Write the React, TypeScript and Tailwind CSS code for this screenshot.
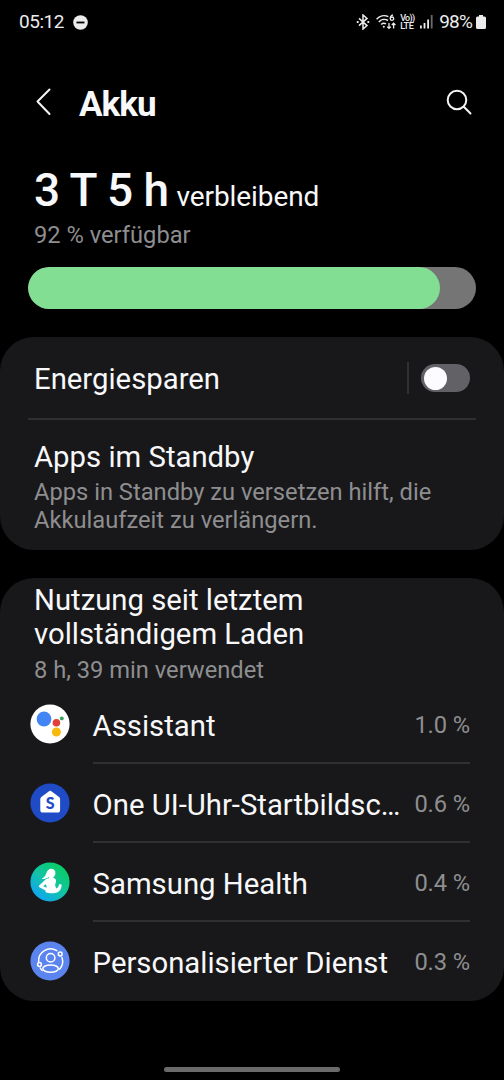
import type { ReactNode } from "react";

type AppUsage = {
  name: string;
  percent: string;
  icon: ReactNode;
};

function AssistantIcon() {
  return (
    <svg viewBox="0 0 40 40" className="h-10 w-10 shrink-0">
      <circle cx="20" cy="20" r="19.6" fill="#fff" />
      <circle cx="14" cy="15" r="7.4" fill="#4285f4" />
      <circle cx="26.4" cy="18.8" r="3.8" fill="#e0403a" />
      <circle cx="31.8" cy="14.4" r="1.9" fill="#34a060" />
      <circle cx="26.4" cy="28" r="4.5" fill="#f8b90c" />
    </svg>
  );
}

function ClockHomeIcon() {
  return (
    <svg viewBox="0 0 40 40" className="h-10 w-10 shrink-0">
      <circle cx="20" cy="20" r="19.6" fill="#1f4bc6" />
      <path
        d="M18.7 8.4a2.4 2.4 0 0 1 3 0l7.4 5.7a2.6 2.6 0 0 1 1 2V27a2.6 2.6 0 0 1-2.6 2.6H12.9A2.6 2.6 0 0 1 10.3 27V16.1a2.6 2.6 0 0 1 1-2z"
        fill="#fff"
      />
      <text
        x="20.2"
        y="26.3"
        textAnchor="middle"
        fontFamily="Lato, sans-serif"
        fontWeight="900"
        fontSize="16"
        fill="#1f4bc6"
      >
        S
      </text>
    </svg>
  );
}

function HealthIcon() {
  return (
    <svg viewBox="0 0 40 40" className="h-10 w-10 shrink-0">
      <defs>
        <linearGradient id="health" x1="0.15" y1="0.9" x2="0.75" y2="0.15">
          <stop offset="0" stopColor="#10a5f5" />
          <stop offset="0.55" stopColor="#12c4a4" />
          <stop offset="1" stopColor="#0acb6c" />
        </linearGradient>
      </defs>
      <circle cx="20" cy="20" r="19.6" fill="url(#health)" />
      <path
        d="M21.400 6.800a4 4 0 0 1 4 4.200c0 1.700-.6 3.200-1.900 4v1c1.300.3 2.300 1 2.500 2.200.3 1.800-.8 3.400-.8 5 0 1.200.7 2.200 1.400 3.200 1.300-.7 2.200-2.200 2.500-4.100l2.500.3c.1 3.300-1.200 6.600-4.300 8-3 .9-8 .9-11 0-.8-.5-1-1.300-.8-2.100L9.400 25.200c-.7-.6-.7-1.400 0-2l5.400-5c1-.9 2-1.500 4.100-1.900v-1.500c-1.800 1.700-4.200 2.500-7.100 1.900 2.200-1.300 3.200-2.200 4-4.200l.6-1.600c.8-2.300 2.600-4.100 5-4.100zM15.600 22.200l-2.500 2.100 3.500 1.500c.2-1.300-.2-2.600-1-3.600z"
        fill="#fff"
        fillRule="evenodd"
      />
    </svg>
  );
}

function CustomizationIcon() {
  return (
    <svg viewBox="0 0 40 40" className="h-10 w-10 shrink-0">
      <circle cx="20" cy="20" r="19.6" fill="#5c84ee" />
      <g fill="none" stroke="#fff" strokeWidth="1.5" strokeLinecap="round">
        <circle cx="20.6" cy="16.8" r="4.3" />
        <ellipse cx="20.6" cy="27.6" rx="7.8" ry="3.7" />
        <path d="M8.6 20.5A12 12 0 0 1 26.8 9.6" />
        <path d="M32 16.5A12 12 0 0 1 29.6 28.2M10.3 27Q11 28.5 12.2 29.5" />
        <circle cx="30.2" cy="13" r="1.9" />
        <circle cx="9.5" cy="23.5" r="1.9" />
      </g>
    </svg>
  );
}

const apps: AppUsage[] = [
  { name: "Assistant", percent: "1.0 %", icon: <AssistantIcon /> },
  {
    name: "One UI-Uhr-Startbildsc…",
    percent: "0.6 %",
    icon: <ClockHomeIcon />,
  },
  { name: "Samsung Health", percent: "0.4 %", icon: <HealthIcon /> },
  {
    name: "Personalisierter Dienst",
    percent: "0.3 %",
    icon: <CustomizationIcon />,
  },
];

function StatusBar() {
  return (
    <div className="flex h-11 items-center pr-[18px] pl-[19px] text-[#ececec]">
      <span className="text-[19px] leading-[22px] tracking-[-0.45px]">
        05:12
      </span>
      <svg viewBox="0 0 15 15" className="ml-[9px] h-[15px] w-[15px]">
        <circle cx="7.5" cy="7.5" r="7.3" fill="#ececec" />
        <path d="M3.5 7.5h8" stroke="#000" strokeWidth="1.8" />
      </svg>
      <div className="ml-auto flex items-center">
        <svg
          viewBox="0 0 14 16"
          className="h-4 w-3.5"
          fill="none"
          stroke="#ececec"
          strokeWidth="1.5"
        >
          <path d="M3 4.400l8 7.200-4 3.400V1l4 3.400-8 7.200" />
          <path d="M.8 8h1.800M11.400 8h1.800" strokeWidth="1.8" />
        </svg>
        <svg
          viewBox="0 0 20 16"
          className="ml-1.5 h-4 w-5"
          fill="none"
          stroke="#ececec"
          strokeWidth="1.5"
        >
          <path d="M.6 5.300A10 10 0 0 1 12.400 2.600M2.800 8A7.200 7.200 0 0 1 12 6.500M5.200 10.500A4.200 4.200 0 0 1 10 9.900" />
          <circle cx="7.8" cy="12.8" r="1" fill="#ececec" stroke="none" />
          <path
            d="M13 9v5.200M11.200 12.600l1.800 1.800 1.800-1.800M17.600 14.500V9.300M15.800 11l1.800-1.800 1.800 1.800"
            strokeWidth="1.3"
          />
          <path d="M17 .8c-1.800.4-2.700 1.800-2.700 3.700" strokeWidth="1.3" />
          <circle cx="16" cy="4.700" r="1.700" strokeWidth="1.3" />
        </svg>
        <div className="ml-1 flex w-[15px] flex-col text-[9px] leading-[8px] font-medium">
          <span className="tracking-[-0.7px] whitespace-nowrap">Vo))</span>
          <span className="tracking-[-0.3px]">LTE</span>
        </div>
        <svg viewBox="0 0 13 14" className="ml-[5px] h-3.5 w-[13px]">
          <path
            d="M0 10.500h1.800v3H0zM3.600 8h1.800v5.500H3.600zM7.200 4.500h1.800v9H7.200z"
            fill="#ececec"
          />
          <path d="M10.800 0h1.800v13.500h-1.800z" fill="#6a6a6a" />
        </svg>
        <span className="ml-1.5 text-[19px] leading-[22px] tracking-[-0.8px]">
          98%
        </span>
        <svg viewBox="0 0 10 14" className="ml-1 h-3.5 w-2.5">
          <path
            d="M3 0h4v1.500h1.500A1.500 1.500 0 0 1 10 3v9.500a1.500 1.500 0 0 1-1.500 1.500h-7A1.500 1.500 0 0 1 0 12.500V3a1.500 1.500 0 0 1 1.500-1.500H3z"
            fill="#ececec"
          />
        </svg>
      </div>
    </div>
  );
}

function Header() {
  return (
    <header className="flex h-[118px] items-center pr-8 pl-9">
      <svg
        viewBox="0 0 16 28"
        className="mb-0.5 h-7 w-4"
        fill="none"
        stroke="#f4f4f6"
        strokeWidth="2"
        strokeLinecap="round"
        strokeLinejoin="round"
      >
        <path d="M13.5 1.5L1.5 13.5L13.5 26" />
      </svg>
      <h1 className="mt-[3px] ml-[27px] text-[35px] leading-[41px] font-bold tracking-[-1px]">
        Akku
      </h1>
      <svg
        viewBox="0 0 26 26"
        className="mb-0.5 ml-auto h-[26px] w-[26px]"
        fill="none"
        stroke="#f4f4f6"
        strokeWidth="2"
        strokeLinecap="round"
      >
        <circle cx="11" cy="11" r="9.3" />
        <path d="M17.8 17.8L24.5 24.5" />
      </svg>
    </header>
  );
}

function BatterySummary() {
  return (
    <section className="flex flex-col px-7 pt-px">
      <div className="flex items-baseline px-1.5 leading-[55px]">
        <span className="text-[46px] font-medium tracking-[-0.5px]">
          3 T 5 h
        </span>
        <span className="ml-2 text-[28px] tracking-[-0.1px]">verbleibend</span>
      </div>
      <p className="-mt-[3px] px-1.5 text-[23.7px] leading-7 text-[#8e8e90]">
        92 % verfügbar
      </p>
      <div className="mt-[18px] h-[42px] overflow-hidden rounded-full bg-[#757575]">
        <div className="h-full w-[92%] rounded-full bg-[#81de92]" />
      </div>
    </section>
  );
}

function SettingsCard() {
  return (
    <section className="mt-7 flex h-[213px] flex-col rounded-[34px] bg-[#18181a] px-7">
      <div className="flex h-[83px] items-center border-b-2 border-[#303032] px-1.5">
        <span className="mt-[3px] text-[29.3px] leading-[34px]">
          Energiesparen
        </span>
        <div className="ml-auto h-8 w-0.5 bg-[#303032]" />
        <div className="mt-px ml-3 flex h-7 w-[49px] items-center rounded-full bg-[#626166] pl-[2.5px]">
          <div className="h-[23px] w-[23px] rounded-full bg-[#fcfcff]" />
        </div>
      </div>
      <div className="px-1.5 pt-5">
        <p className="text-[29.3px] leading-[34px]">Apps im Standby</p>
        <p className="mt-1 text-[23.7px] leading-7 text-[#8e8e90]">
          Apps in Standby zu versetzen hilft, die Akkulaufzeit zu verlängern.
        </p>
      </div>
    </section>
  );
}

function UsageCard() {
  return (
    <section className="mt-7 h-[423px] rounded-[34px] bg-[#18181a] pt-[5px]">
      <h2 className="w-[320px] pl-[34px] text-[29.3px] leading-[34px]">
        Nutzung seit letztem vollständigem Laden
      </h2>
      <p className="mt-[5px] pl-[34px] text-[23.7px] leading-7 text-[#8e8e90]">
        8 h, 39 min verwendet
      </p>
      <ul className="mt-px pr-[34px] pl-[30px]">
        {apps.map((app) => (
          <li key={app.name} className="group flex h-[79px] items-center">
            <div className="mb-0.5">{app.icon}</div>
            <div className="ml-[22.6px] flex h-full flex-1 items-center justify-between border-b-2 border-[#303032] pt-1 group-last:border-transparent">
              <span className="text-[29.3px] leading-[34px] whitespace-nowrap">
                {app.name}
              </span>
              <span className="mb-0.5 text-[23.7px] leading-7 tracking-[-0.1px] whitespace-nowrap text-[#8e8e90]">
                {app.percent}
              </span>
            </div>
          </li>
        ))}
      </ul>
    </section>
  );
}

export default function App() {
  return (
    <main className="flex h-[1080px] w-[504px] flex-col overflow-hidden bg-black font-[Roboto,sans-serif] text-[#f8f8fa]">
      <StatusBar />
      <Header />
      <BatterySummary />
      <SettingsCard />
      <UsageCard />
      <div className="mx-auto mt-auto mb-2 h-[5px] w-[176px] rounded-full bg-[#6b6b6b]" />
    </main>
  );
}
